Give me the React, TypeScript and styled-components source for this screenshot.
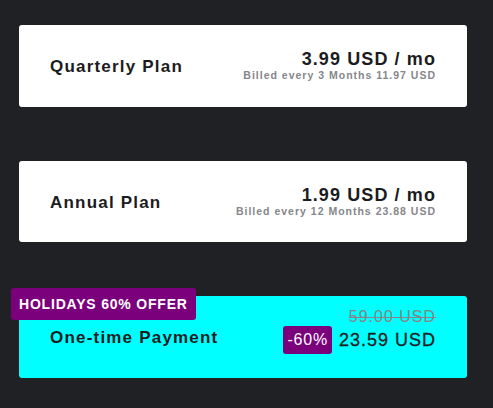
import React from "react";
import styled, { createGlobalStyle } from "styled-components";

const GlobalStyle = createGlobalStyle`
  body {
    margin: 0;
    background: #202125;
    font-family: "Liberation Sans", Arial, sans-serif;
  }
`;

type Plan = {
  name: string;
  price: string;
  billed: string;
};

const plans: Plan[] = [
  { name: "Quarterly Plan", price: "3.99 USD / mo", billed: "Billed every 3 Months 11.97 USD" },
  { name: "Annual Plan", price: "1.99 USD / mo", billed: "Billed every 12 Months 23.88 USD" },
];

const App = () => {
  return (
    <>
      <GlobalStyle />
      <Page>
        {plans.map(plan => (
          <Card key={plan.name}>
            <PlanName>{plan.name}</PlanName>
            <PriceBlock>
              <Price>{plan.price}</Price>
              <Billed>{plan.billed}</Billed>
            </PriceBlock>
          </Card>
        ))}
        <Card $highlight>
          <Badge>HOLIDAYS 60% OFFER</Badge>
          <PlanName>One-time Payment</PlanName>
          <PriceBlock $raised>
            <OldPrice>59.00 USD</OldPrice>
            <PriceRow>
              <Discount>-60%</Discount>
              <FinalPrice>23.59 USD</FinalPrice>
            </PriceRow>
          </PriceBlock>
        </Card>
      </Page>
    </>
  );
};

const Page = styled.main`
  display: flex;
  flex-direction: column;
  gap: 54px;
  width: 448px;
  padding: 25px 0 0 19px;
`;

const Card = styled.section<{ $highlight?: boolean }>`
  position: relative;
  display: flex;
  align-items: center;
  justify-content: space-between;
  height: 81.5px;
  box-sizing: border-box;
  padding: 0 32px 0 31px;
  border-radius: 3px;
  background: ${props => (props.$highlight ? "#00ffff" : "#ffffff")};
  color: #1c1c1e;
`;

const PlanName = styled.h3`
  margin: 0;
  font-size: 17px;
  font-weight: 700;
  letter-spacing: 1.2px;
  padding-top: 3px;
`;

const PriceBlock = styled.div<{ $raised?: boolean }>`
  display: flex;
  flex-direction: column;
  align-items: flex-end;
  padding-bottom: ${props => (props.$raised ? "10px" : "0")};
`;

const Price = styled.span`
  font-size: 18px;
  font-weight: 700;
  letter-spacing: 1.1px;
  line-height: 20px;
  margin-right: -1px;
`;

const Billed = styled.span`
  font-size: 10.5px;
  font-weight: 700;
  letter-spacing: 1px;
  color: #86868a;
  line-height: 13px;
  margin-right: -1px;
`;

const OldPrice = styled.span`
  font-size: 16px;
  letter-spacing: 1px;
  color: #858585;
  text-decoration: line-through;
  line-height: 16px;
  margin-right: -1px;
`;

const PriceRow = styled.div`
  display: flex;
  align-items: center;
  gap: 7px;
  margin-top: 1px;
`;

const Discount = styled.span`
  display: inline-flex;
  align-items: center;
  justify-content: center;
  height: 28px;
  padding: 0 4px;
  border-radius: 3px;
  background: #7b007b;
  color: #ffffff;
  font-size: 16px;
  letter-spacing: 0.8px;
`;

const FinalPrice = styled.span`
  font-size: 18px;
  letter-spacing: 1px;
  margin-right: -1px;
  -webkit-text-stroke: 0.3px #1c1c1e;
`;

const Badge = styled.div`
  position: absolute;
  left: -8px;
  top: -8px;
  display: flex;
  align-items: center;
  height: 32px;
  padding: 0 8px;
  border-radius: 3px;
  background: #7b007b;
  color: #ffffff;
  font-size: 14px;
  font-weight: 700;
  letter-spacing: 0.8px;
`;

export default App;
